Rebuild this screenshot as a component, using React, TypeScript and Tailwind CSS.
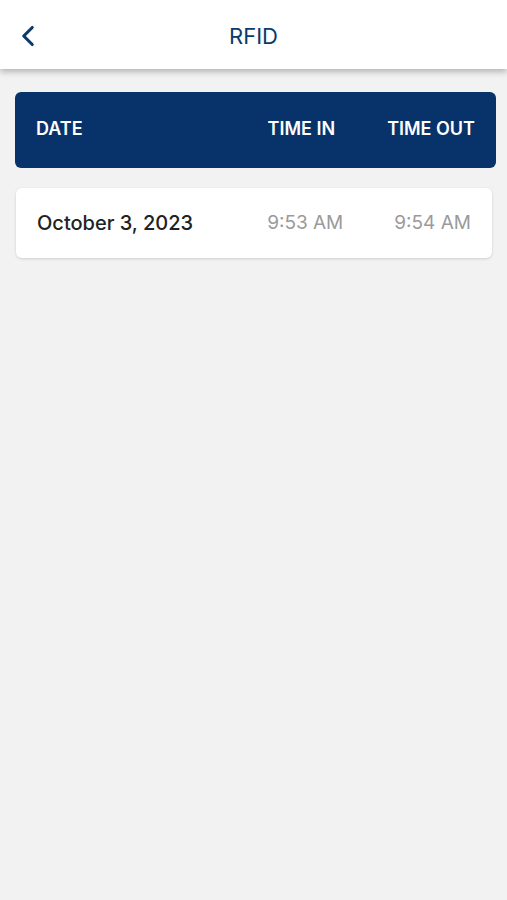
import { ChevronLeft } from 'lucide-react';

const rows = [{ date: 'October 3, 2023', timeIn: '9:53 AM', timeOut: '9:54 AM' }];

export default function App() {
  return (
    <div className="min-h-[900px] bg-[#f2f2f2] font-['Inter',sans-serif]">
      <header className="relative flex h-[69px] items-center justify-center bg-white shadow-[0_3px_6px_rgba(0,0,0,0.25)]">
        <button className="absolute left-[11px] top-[19px] text-[#0b3a6b]">
          <ChevronLeft className="h-[34px] w-[34px]" strokeWidth={2.2} />
        </button>
        <h1 className="pt-[3px] text-[22px] font-normal text-[#0b3a6b]">RFID</h1>
      </header>

      <div className="flex flex-col pl-[15px] pr-[11px] pt-[23px]">
        <div className="flex h-[76px] items-center rounded-[6px] bg-[#08336a] pb-[3px] pl-[21px] pr-[21px] text-[18px] font-semibold text-white">
          <span className="flex-1">DATE</span>
          <span>TIME IN</span>
          <span className="ml-[52px]">TIME OUT</span>
        </div>

        {rows.map((r) => (
          <div
            key={r.date}
            className="mt-[20px] mr-[4px] ml-[1px] flex h-[70px] items-center rounded-[6px] bg-white px-[21px] shadow-[0_1px_3px_rgba(0,0,0,0.15)]"
          >
            <span className="flex-1 text-[20px] font-medium text-[#222222]">{r.date}</span>
            <span className="text-[19px] text-[#9a9a9a]">{r.timeIn}</span>
            <span className="ml-[51px] text-[19px] text-[#9a9a9a]">{r.timeOut}</span>
          </div>
        ))}
      </div>
    </div>
  );
}
